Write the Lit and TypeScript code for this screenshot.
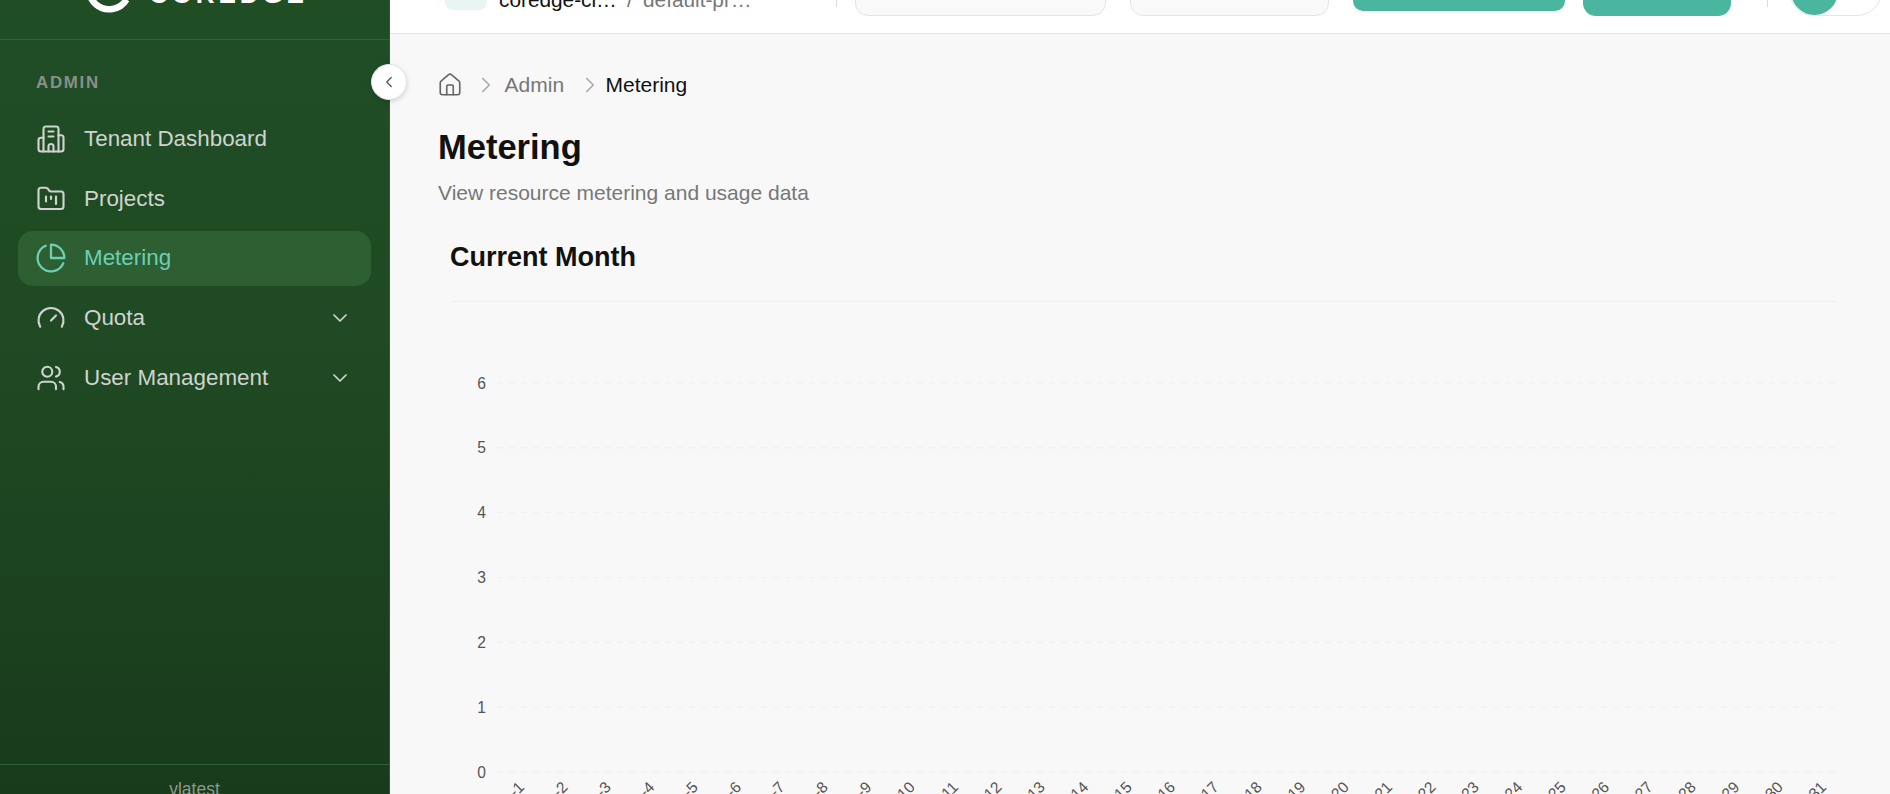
import { LitElement, html, css, svg } from "lit";
import { customElement } from "lit/decorators.js";

const ICONS: Record<string, ReturnType<typeof svg>> = {
  building: svg`<path d="M6 22V4a2 2 0 0 1 2-2h8a2 2 0 0 1 2 2v18"/><path d="M6 11H4a2 2 0 0 0-2 2v7a2 2 0 0 0 2 2h16a2 2 0 0 0 2-2v-9a2 2 0 0 0-2-2h-2"/><path d="M10 6h4"/><path d="M10 10h4"/><path d="M10 22v-4a2 2 0 0 1 4 0v4"/>`,
  folder: svg`<path d="M4 20h16a2 2 0 0 0 2-2V8a2 2 0 0 0-2-2h-7.93a2 2 0 0 1-1.66-.9l-.82-1.2A2 2 0 0 0 7.93 3H4a2 2 0 0 0-2 2v13c0 1.1.9 2 2 2Z"/><path d="M8 10v4"/><path d="M12 10v2"/><path d="M16 10v6"/>`,
  pie: svg`<path d="M21.21 15.89A10 10 0 1 1 8 2.83"/><path d="M22 12A10 10 0 0 0 12 2v10z"/>`,
  gauge: svg`<path d="m12 14 4-4"/><path d="M3.34 19a10 10 0 1 1 17.32 0"/>`,
  users: svg`<path d="M16 21v-2a4 4 0 0 0-4-4H6a4 4 0 0 0-4 4v2"/><circle cx="9" cy="7" r="4"/><path d="M22 21v-2a4 4 0 0 0-3-3.87"/><path d="M16 3.13a4 4 0 0 1 0 7.75"/>`,
  down: svg`<path d="m6 9 6 6 6-6"/>`,
  right: svg`<path d="m9 18 6-6-6-6"/>`,
  left: svg`<path d="m15 18-6-6 6-6"/>`,
  house: svg`<path d="M15 21v-8a1 1 0 0 0-1-1h-4a1 1 0 0 0-1 1v8"/><path d="M3 10a2 2 0 0 1 .709-1.528l7-5.999a2 2 0 0 1 2.582 0l7 5.999A2 2 0 0 1 21 10v9a2 2 0 0 1-2 2H5a2 2 0 0 1-2-2z"/>`,
};

const icon = (name: string, cls: string) => html`<svg class="ic ${cls}" viewBox="0 0 24 24" fill="none" stroke="currentColor" stroke-linecap="round" stroke-linejoin="round">${ICONS[name]}</svg>`;

const NAV = [
  { icon: "building", label: "Tenant Dashboard" },
  { icon: "folder", label: "Projects" },
  { icon: "pie", label: "Metering", active: true },
  { icon: "gauge", label: "Quota", more: true },
  { icon: "users", label: "User Management", more: true },
];

const PLOT_L = 47;
const PLOT_R = 1388;
const BAND = 43.4;
const Y0 = 470;
const STEP = 64.83;

@customElement("app-root")
export class AppRoot extends LitElement {
  static styles = css`
    :host { display: block; height: 794px; overflow: hidden; font-family: "Liberation Sans", Arial, sans-serif; background: #f8f8f8; }
    * { box-sizing: border-box; }
    .shell { display: flex; height: 875px; margin-top: -51px; position: relative; }
    .ic { flex: none; stroke-width: 1.7; display: block; }

    .side { width: 390px; flex: none; display: flex; flex-direction: column; background: linear-gradient(180deg, #204e25 0%, #1f4a23 45%, #183a1b 100%); position: relative; border-right: 1px solid #2a5a30; }
    .brand { height: 91px; display: flex; align-items: center; gap: 12px; padding: 0 0 10px 81px; border-bottom: 1px solid #33603a; }
    .logo { width: 56px; height: 56px; flex: none; display: block; }
    .word { font-size: 26px; font-weight: 700; letter-spacing: 3.9px; color: #fff; padding-top: 9px; line-height: 30px; }
    .section { font-size: 16.9px; font-weight: 700; letter-spacing: 1.7px; color: #8a8f8a; line-height: 24px; padding: 31.4px 0 0 36px; }
    nav { display: flex; flex-direction: column; gap: 5.2px; padding: 16.2px 18px 0; }
    .item { height: 54.6px; display: flex; align-items: center; padding: 0 18px 0 18px; border-radius: 15px; color: #d0d3d0; font-size: 22.4px; }
    .item .lbl { flex: 1; margin-left: 18px; }
    .item .ic.main { width: 30px; height: 30px; }
    .item.active { background: #2d5f32; color: #6ccfb4; }
    .item.active .ic.main { width: 32px; height: 32px; margin-left: -1px; margin-right: -1px; }
    .item .ic.chev { width: 24px; height: 24px; margin-right: 1px; stroke-width: 1.75; }
    .foot { margin-top: auto; height: 60px; border-top: 1px solid #2f6035; text-align: center; padding-top: 12px; color: #8d988e; font-size: 17.5px; line-height: 24px; }
    .toggle { position: absolute; left: 371px; top: 115px; width: 36px; height: 36px; border-radius: 50%; background: #fff; border: 1px solid #dfe3e8; box-shadow: 0 2px 5px rgba(0,0,0,.14); display: flex; align-items: center; justify-content: center; color: #4b5563; z-index: 2; }
    .toggle .ic { width: 18px; height: 18px; }

    .col { flex: 1; min-width: 0; display: flex; flex-direction: column; }
    header { height: 85px; flex: none; background: #fff; border-bottom: 1px solid #e3e3e3; display: flex; align-items: center; padding-left: 55px; }
    .org { width: 42px; height: 38px; border-radius: 8px; background: #e9f5f2; flex: none; }
    .crumbtxt { display: flex; align-items: center; font-size: 20.8px; line-height: 26px; padding-top: 18px; margin-left: 12px; color: #111; }
    .crumbtxt .a { width: 118px; white-space: nowrap; overflow: hidden; text-overflow: ellipsis; }
    .crumbtxt .s { color: #777; width: 26px; text-align: center; }
    .crumbtxt .b { width: 110px; white-space: nowrap; overflow: hidden; text-overflow: ellipsis; color: #777; }
    .vr { width: 1px; height: 32px; background: #dcdcdc; flex: none; }
    .pill { height: 49px; border-radius: 13px; background: #f9f9f9; border: 1px solid #e4e4e4; flex: none; }
    .btn { background: #4bb69f; flex: none; }
    .avatar { width: 93px; height: 50px; border-radius: 25px; border: 1px solid #e5e5e5; margin-left: 21px; padding: 1px; flex: none; display: flex; }
    .avatar i { width: 47px; height: 47px; border-radius: 50%; background: #4bb69f; display: block; }

    main { flex: 1; padding: 38px 52px 0 48px; background: #f8f8f8; }
    .bc { display: flex; align-items: center; height: 26px; font-size: 21px; color: #777; }
    .bc .home { width: 26px; height: 26px; margin-left: -1px; color: #666; stroke-width: 1.5; }
    .bc .sep { width: 26px; height: 26px; color: #aaa; margin: 0 3px 0 12.4px; stroke-width: 1.5; }
    .bc .sep.first { margin: 0 5.6px 0 10px; }
    .bc .cur { color: #111; }
    h1 { margin: 28px 0 0; font-size: 34.5px; line-height: 42px; font-weight: 700; color: #111; }
    .sub { margin: 12px 0 0; font-size: 21px; line-height: 26px; color: #777; }
    .card { margin-top: 34px; padding-left: 12px; }
    h2 { margin: 0; font-size: 27px; line-height: 34px; font-weight: 700; color: #111; padding-bottom: 27px; border-bottom: 1px solid #eeeeee; }
    .chart { display: block; width: 1388px; height: 520px; overflow: visible; }
    .chart text { font-family: "Liberation Sans", Arial, sans-serif; font-size: 15.6px; fill: #555; }
    .chart line { stroke: #eeeeee; stroke-width: 1; stroke-dasharray: 6 6; }
  `;

  private chart() {
    const rows = [0, 1, 2, 3, 4, 5, 6];
    const days = Array.from({ length: 31 }, (_, i) => i + 1);
    return html`<svg class="chart" viewBox="0 0 1388 520">
      ${rows.map((v) => {
        const y = Y0 - v * STEP;
        return svg`<line x1=${PLOT_L} x2=${PLOT_R} y1=${y} y2=${y}></line>
          <text x="36" y=${y + 5.5} text-anchor="end">${v}</text>`;
      })}
      ${days.map((d) => {
        const x = PLOT_L + (d - 0.5) * BAND + 6.5;
        const y = Y0 + 16;
        return svg`<text x=${x} y=${y} text-anchor="end" transform="rotate(-45 ${x} ${y})">-${d}</text>`;
      })}
    </svg>`;
  }

  render() {
    return html`<div class="shell">
      <aside class="side">
        <div class="brand">
          <svg class="logo" viewBox="0 0 56 56" fill="none" stroke="#fff" stroke-width="6.5">
            <path d="M45.5 38.5A20.25 20.25 0 1 1 45.5 17.5"></path>
          </svg>
          <span class="word">COREDGE</span>
        </div>
        <div class="section">ADMIN</div>
        <nav>
          ${NAV.map((n) => html`<div class="item ${n.active ? "active" : ""}">
            ${icon(n.icon, "main")}
            <span class="lbl">${n.label}</span>
            ${n.more ? icon("down", "chev") : ""}
          </div>`)}
        </nav>
        <div class="foot">vlatest</div>
        <div class="toggle">${icon("left", "")}</div>
      </aside>
      <div class="col">
        <header>
          <div class="org"></div>
          <div class="crumbtxt"><span class="a">coredge-cloud</span><span class="s">/</span><span class="b">default-project</span></div>
          <div class="vr" style="margin-left:83px"></div>
          <div class="pill" style="margin-left:18px;width:251px"></div>
          <div class="pill" style="margin-left:24px;width:199px"></div>
          <div class="btn" style="margin-left:24px;width:212px;height:40px;border-radius:10px"></div>
          <div class="btn" style="margin-left:18px;width:148px;height:50px;border-radius:13px"></div>
          <div class="vr" style="margin-left:36px"></div>
          <div class="avatar"><i></i></div>
        </header>
        <main>
          <div class="bc">
            ${icon("house", "home")}
            ${icon("right", "sep first")}
            <span>Admin</span>
            ${icon("right", "sep")}
            <span class="cur">Metering</span>
          </div>
          <h1>Metering</h1>
          <p class="sub">View resource metering and usage data</p>
          <section class="card">
            <h2>Current Month</h2>
            ${this.chart()}
          </section>
        </main>
      </div>
    </div>`;
  }
}
